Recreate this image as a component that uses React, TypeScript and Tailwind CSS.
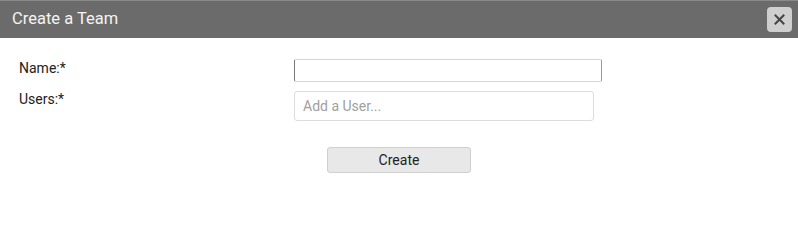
import React from "react";

export default function App() {
  return (
    <div className="w-[798px] h-[250px] bg-white" style={{ fontFamily: "Roboto, 'Liberation Sans', sans-serif" }}>
      <div className="h-[38px] bg-[#6b6b6b] border-t border-[#8a8a8a] flex items-center justify-between pl-[12px] pr-[6px]">
        <span className="text-[16.5px] text-[#f4f4f4] leading-none">Create a Team</span>
        <button className="w-[25px] h-[25px] rounded-[4px] bg-[#cfcfcf] flex items-center justify-center">
          <svg width="11" height="11" viewBox="0 0 11 11">
            <path d="M1.5 1.5 L9.5 9.5 M9.5 1.5 L1.5 9.5" stroke="#444" strokeWidth="2" strokeLinecap="square" />
          </svg>
        </button>
      </div>
      <div className="pt-[21px] pl-[19px]">
        <div className="flex items-start">
          <label className="w-[275px] text-[14px] leading-[20px] text-[#222] mt-[-1px]">Name:*</label>
          <input className="w-[308px] h-[23px] border border-t-[#d6d6d6] border-b-[#d6d6d6] border-l-[#777] border-r-[#999] rounded-[2px] outline-none" />
        </div>
        <div className="flex items-start mt-[9px]">
          <label className="w-[275px] text-[14px] leading-[20px] text-[#222] mt-[-2px]">Users:*</label>
          <input
            placeholder="Add a User..."
            className="w-[300px] h-[30px] border border-[#ddd] rounded-[3px] px-[8px] text-[14px] placeholder:text-[#a0a0a0] outline-none"
          />
        </div>
        <div className="flex mt-[26px] pl-[308px]">
          <button className="w-[144px] h-[26px] bg-[#e8e8e8] border border-[#cfcfcf] rounded-[3px] text-[14px] text-[#222]">
            Create
          </button>
        </div>
      </div>
    </div>
  );
}
